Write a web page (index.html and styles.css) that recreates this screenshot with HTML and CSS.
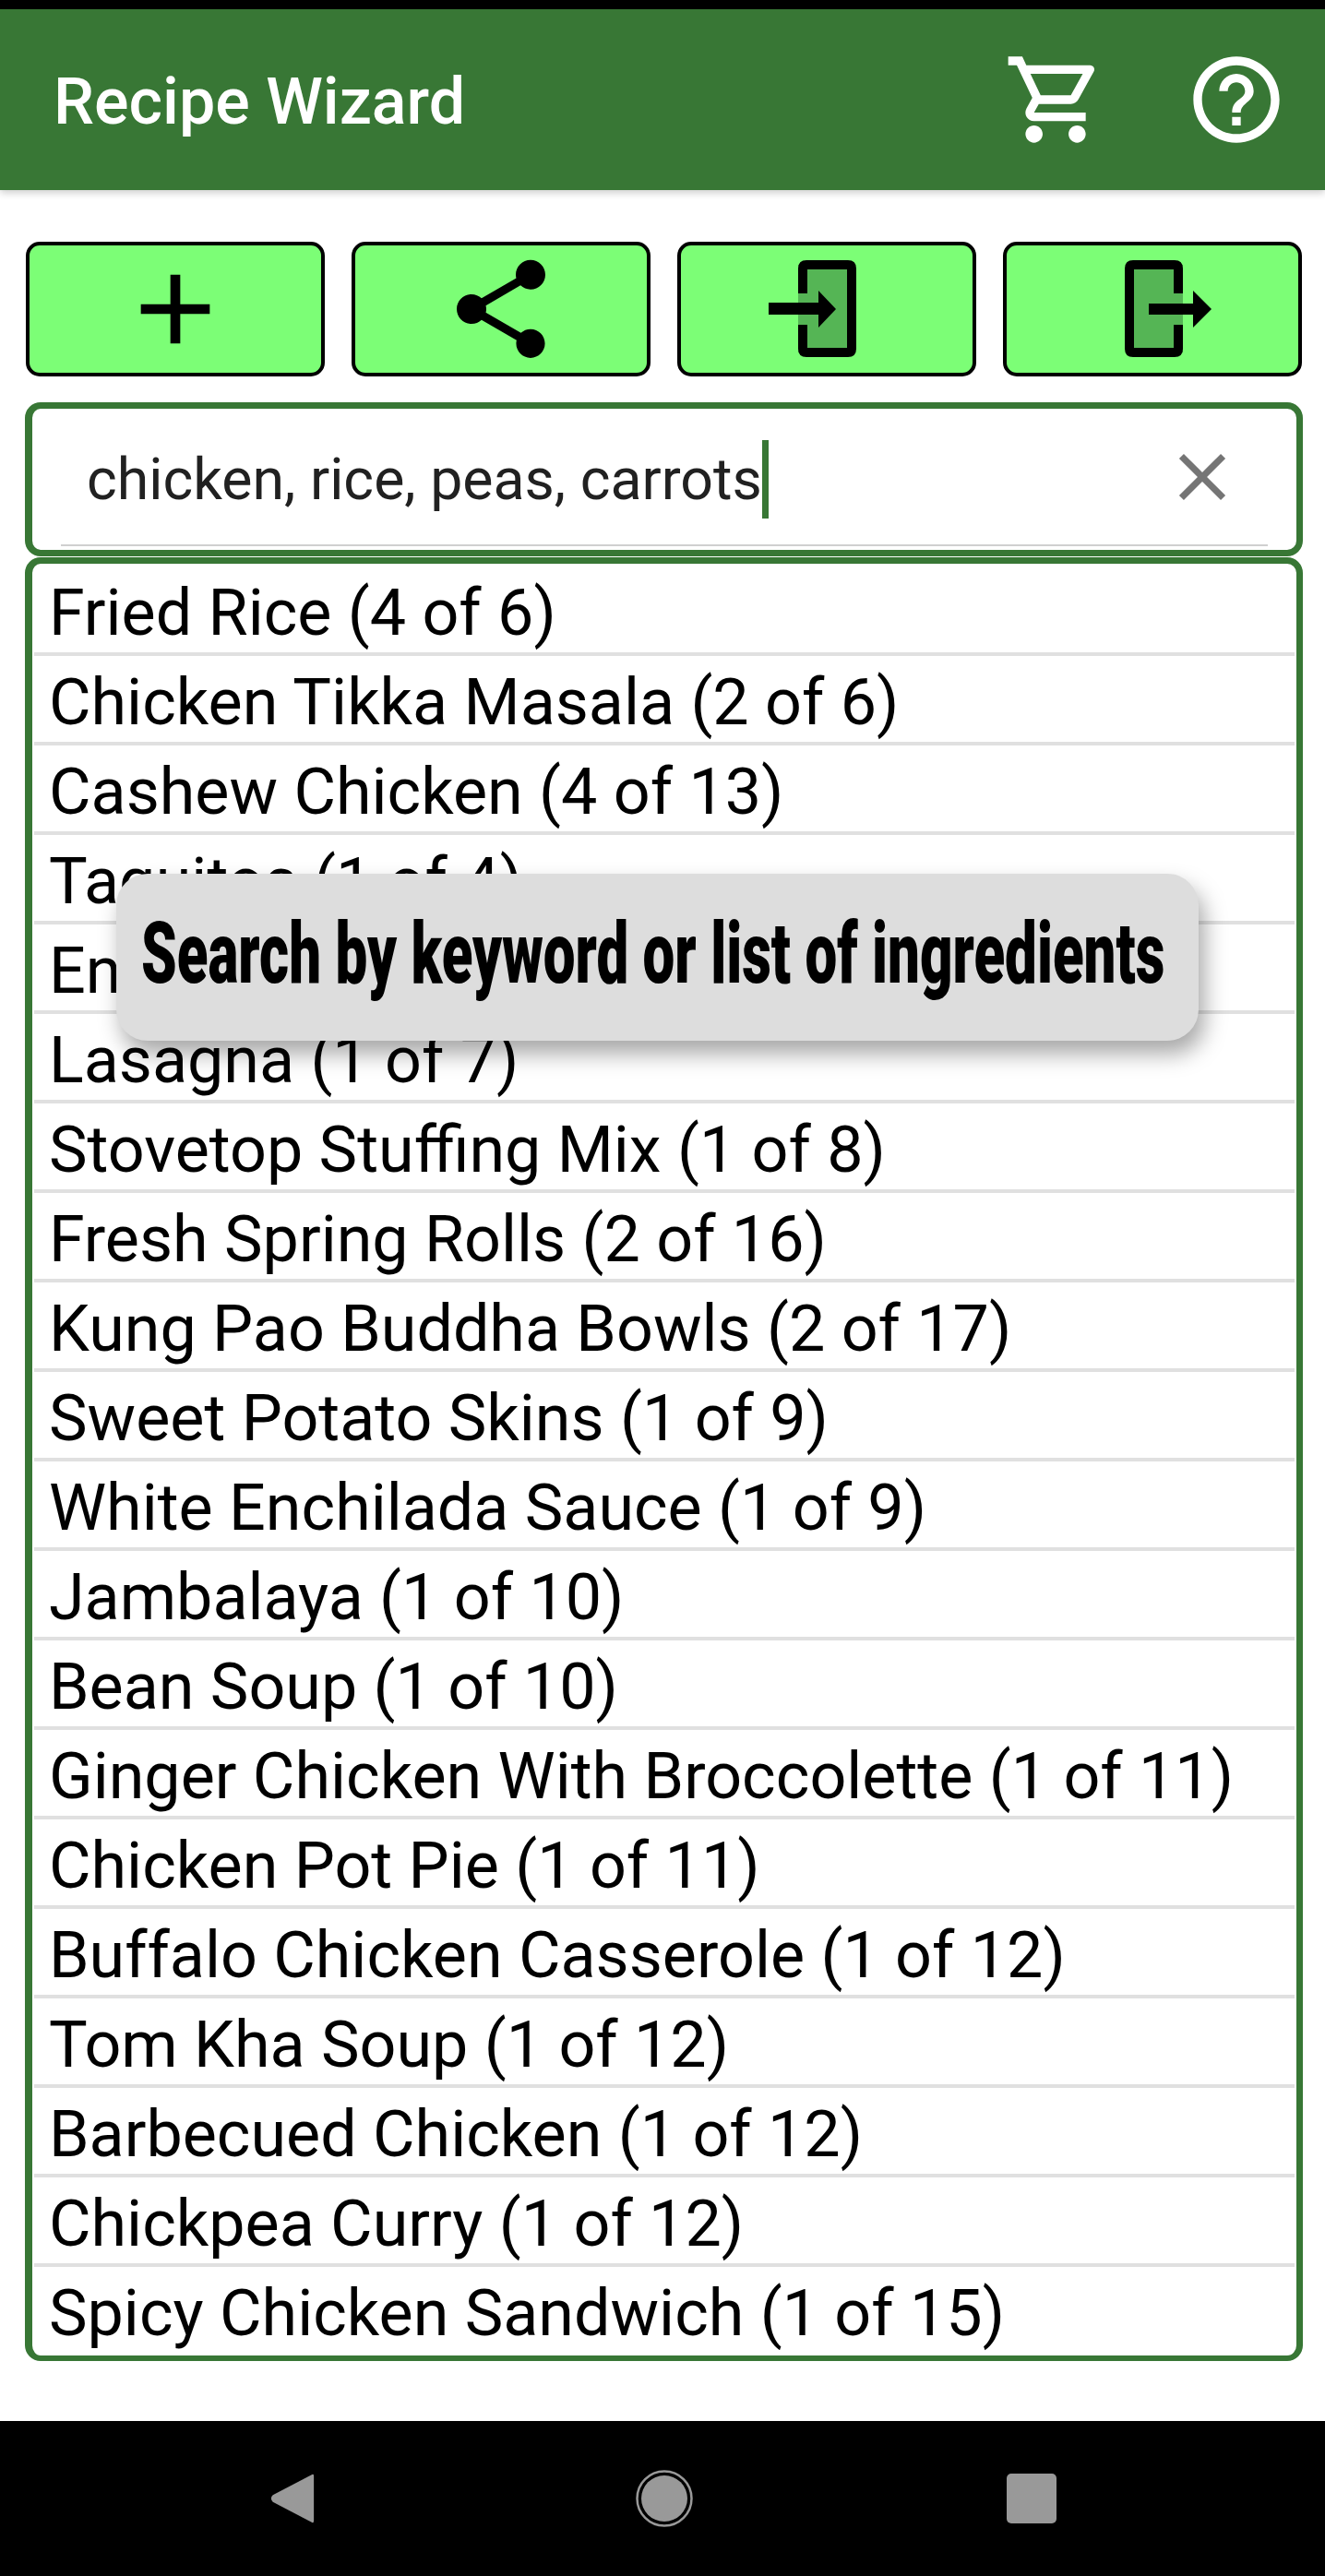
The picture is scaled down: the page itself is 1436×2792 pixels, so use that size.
FILE: index.html
```html
<!DOCTYPE html>
<html lang="en">
<head>
    <meta charset="UTF-8">
    <meta name="viewport" content="width=device-width,initial-scale=1.0">
    <title>Recipe Wizard</title>
    <link rel="stylesheet" href="styles.css">
</head>
<body>
    <div class="status-bar"></div>
    <header class="app-bar">
        <div class="app-title">Recipe Wizard</div>
        <svg class="bar-icon cart-icon" viewBox="0 0 24 24"><path d="M15.55 13c.75 0 1.41-.41 1.75-1.03l3.58-6.49c.37-.66-.11-1.48-.87-1.48H5.21l-.94-2H1v2h2l3.6 7.59-1.35 2.44C4.52 15.37 5.48 17 7 17h12v-2H7l1.1-2h7.45zM6.16 6h12.15l-2.76 5H8.53L6.16 6zM7 18c-1.1 0-1.99.9-1.99 2S5.9 22 7 22s2-.9 2-2-.9-2-2-2zm10 0c-1.1 0-1.99.9-1.99 2s.89 2 1.99 2 2-.9 2-2-.9-2-2-2z"/></svg>
        <svg class="bar-icon help-icon" viewBox="0 0 24 24"><path d="M11 18h2v-2h-2v2zm1-16C6.48 2 2 6.48 2 12s4.48 10 10 10 10-4.48 10-10S17.52 2 12 2zm0 18c-4.41 0-8-3.59-8-8s3.59-8 8-8 8 3.59 8 8-3.59 8-8 8zm0-14c-2.21 0-4 1.79-4 4h2c0-1.1.9-2 2-2s2 .9 2 2c0 2-3 1.75-3 5h2c0-2.25 3-2.5 3-5 0-2.21-1.79-4-4-4z"/></svg>
    </header>
    <main class="content">
        <div class="actions">
            <button class="action"><svg class="action-icon" viewBox="0 0 24 24"><path d="M19 13h-6v6h-2v-6H5v-2h6V5h2v6h6v2z"/></svg></button>
            <button class="action"><svg class="action-icon" viewBox="0 0 24 24"><path d="M18 16.08c-.76 0-1.44.3-1.96.77L8.91 12.7c.05-.23.09-.46.09-.7s-.04-.47-.09-.7l7.05-4.11c.54.5 1.25.81 2.04.81 1.66 0 3-1.34 3-3s-1.34-3-3-3-3 1.34-3 3c0 .24.04.47.09.7L8.04 9.81C7.5 9.31 6.79 9 6 9c-1.66 0-3 1.34-3 3s1.34 3 3 3c.79 0 1.5-.31 2.04-.81l7.12 4.16c-.05.21-.08.43-.08.65 0 1.61 1.31 2.92 2.92 2.92s2.92-1.31 2.92-2.92-1.31-2.92-2.92-2.92z"/></svg></button>
            <button class="action">
                <svg class="action-icon" viewBox="0 0 128 128">
                    <path class="door-fill" d="M33 16h58v95H33z"/>
                    <path d="M33 47V20q0-9 9-9h45q9 0 9 9v87q0 9-9 9H42q-9 0-9-9V81h10v25h43V21H43v26z"/>
                    <path d="M1 57h54V44l19 20-19 20V70H1z"/>
                </svg>
            </button>
            <button class="action">
                <svg class="action-icon" viewBox="0 0 128 128">
                    <path class="door-fill" d="M39 16h58v95H39z"/>
                    <path d="M97 47V20q0-9-9-9H43q-9 0-9 9v87q0 9 9 9h45q9 0 9-9V81H87v25H44V21h43v26z"/>
                    <path d="M60 58h48V44l20 20-20 20V70H60z"/>
                </svg>
            </button>
        </div>
        <div class="search-box">
            <div class="search-text">chicken, rice, peas, carrots<span class="caret"></span></div>
            <svg class="clear-icon" viewBox="0 0 24 24"><path d="M19 6.41L17.59 5 12 10.59 6.41 5 5 6.41 10.59 12 5 17.59 6.41 19 12 13.41 17.59 19 19 17.59 13.41 12z"/></svg>
            <div class="search-line"></div>
        </div>
        <ul class="results">
            <li>Fried Rice (4 of 6)</li>
            <li>Chicken Tikka Masala (2 of 6)</li>
            <li>Cashew Chicken (4 of 13)</li>
            <li>Taquitos (1 of 4)</li>
            <li>Enchiladas (1 of 5)</li>
            <li>Lasagna (1 of 7)</li>
            <li>Stovetop Stuffing Mix (1 of 8)</li>
            <li>Fresh Spring Rolls (2 of 16)</li>
            <li>Kung Pao Buddha Bowls (2 of 17)</li>
            <li>Sweet Potato Skins (1 of 9)</li>
            <li>White Enchilada Sauce (1 of 9)</li>
            <li>Jambalaya (1 of 10)</li>
            <li>Bean Soup (1 of 10)</li>
            <li>Ginger Chicken With Broccolette (1 of 11)</li>
            <li>Chicken Pot Pie (1 of 11)</li>
            <li>Buffalo Chicken Casserole (1 of 12)</li>
            <li>Tom Kha Soup (1 of 12)</li>
            <li>Barbecued Chicken (1 of 12)</li>
            <li>Chickpea Curry (1 of 12)</li>
            <li>Spicy Chicken Sandwich (1 of 15)</li>
        </ul>
    </main>
    <div class="tooltip"><span class="tooltip-text">Search by keyword or list of ingredients</span></div>
    <nav class="nav-bar">
        <svg class="nav-icon" viewBox="0 0 54 60"><path d="M50 2q2-1 2 2v52q0 3-2 2L4 34q-4-4 0-8z"/></svg>
        <svg class="nav-icon" viewBox="0 0 64 64"><circle cx="32" cy="32" r="25"/><circle class="nav-ring" cx="32" cy="32" r="29.5"/></svg>
        <svg class="nav-icon" viewBox="0 0 54 54"><rect width="54" height="54" rx="5"/></svg>
    </nav>
</body>
</html>
```

FILE: styles.css
```css
html,body{
    margin:0;
    padding:0;
    background-color:#fff;
}
body{
    position:relative;
    display:flex;
    flex-direction:column;
    height:2792px;
    overflow:hidden;
    font-family:Roboto,sans-serif;
}
.status-bar{
    height:10px;
    background-color:#000;
}
.app-bar{
    display:flex;
    align-items:center;
    height:196px;
    padding-left:58px;
    background-color:#387735;
    box-shadow:0 3px 8px rgba(0,0,0,0.2);
}
.app-title{
    flex:1;
    padding-top:4px;
    color:#fff;
    font-size:70px;
    font-weight:500;
}
.bar-icon{
    width:112px;
    height:112px;
    fill:#fff;
}
.help-icon{
    margin:0 40px 0 84px;
}
.content{
    padding:56px 24px 0 28px;
}
.actions{
    display:grid;
    grid-template-columns:repeat(4,324px);
    gap:29px;
}
.action{
    display:flex;
    align-items:center;
    justify-content:center;
    height:146px;
    padding:0;
    background-color:#7cfe76;
    border:4px solid #000;
    border-radius:15px;
}
.action-icon{
    width:128px;
    height:128px;
    flex:none;
}
.door-fill{
    fill:#55b555;
}
.search-box{
    position:relative;
    box-sizing:border-box;
    height:167px;
    margin:28px 0 0 -1px;
    padding:39px 0 0 59px;
    border:7px solid #387735;
    border-left-width:8px;
    border-radius:17px;
}
.search-text{
    display:flex;
    align-items:center;
    height:74px;
    color:#212121;
    font-size:62.6px;
}
.caret{
    flex:none;
    width:7px;
    height:85px;
    background-color:#387735;
}
.clear-icon{
    position:absolute;
    right:59px;
    top:31px;
    width:86px;
    height:86px;
    fill:#757575;
}
.search-line{
    position:absolute;
    left:31px;
    right:31px;
    bottom:4px;
    height:2px;
    background-color:#d0d0d0;
}
.results{
    box-sizing:border-box;
    height:1955px;
    margin:1px 0 0 -1px;
    padding:3px 0;
    list-style:none;
    border:solid #387735;
    border-width:7px 7px 6px 8px;
    border-radius:17px;
}
.results li{
    height:93px;
    margin:0 2px;
    padding-left:16px;
    border-bottom:4px solid #e0e0e0;
    color:#000;
    font-size:70px;
    line-height:100px;
    white-space:nowrap;
}
.results li:last-child{
    border-bottom:none;
}
.tooltip{
    position:absolute;
    left:126px;
    top:947px;
    box-sizing:border-box;
    width:1173px;
    height:181px;
    padding-left:27px;
    overflow:hidden;
    background-color:#ddd;
    border-radius:34px;
    box-shadow:6px 14px 24px rgba(0,0,0,0.35);
    line-height:174px;
    white-space:nowrap;
}
.tooltip-text{
    display:inline-block;
    color:#000;
    font-family:Roboto,sans-serif;
    font-size:92px;
    font-weight:900;
    transform:scaleX(0.672);
    transform-origin:left center;
}
.nav-bar{
    position:relative;
    height:168px;
    margin-top:auto;
    background-color:#000;
}
.nav-icon{
    position:absolute;
    fill:#999;
}
.nav-icon:nth-child(1){
    left:292px;
    top:56px;
    width:50px;
    height:56px;
}
.nav-icon:nth-child(2){
    left:688px;
    top:52px;
    width:64px;
    height:64px;
}
.nav-icon:nth-child(3){
    left:1091px;
    top:57px;
    width:54px;
    height:54px;
}
.nav-ring{
    fill:none;
    stroke:#999;
    stroke-width:2.5;
}
```
